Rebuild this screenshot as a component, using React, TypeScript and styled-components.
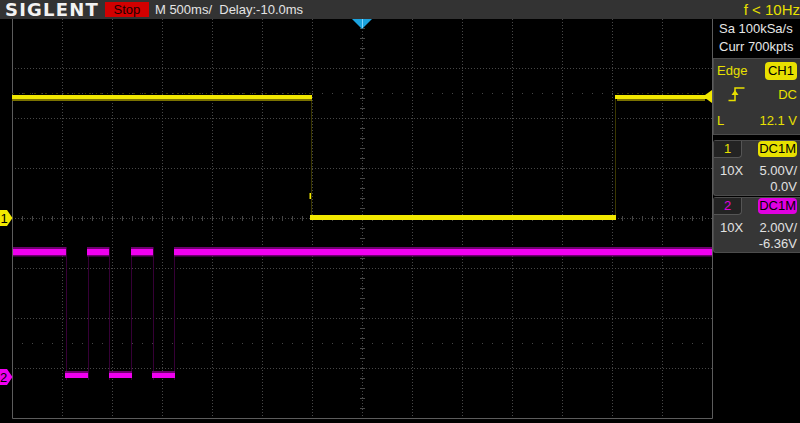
import styled, { createGlobalStyle } from 'styled-components'

const YELLOW = '#f2e800'
const YELLOW_DIM = '#7a7200'
const YELLOW_EDGE = '#3a3600'
const MAGENTA = '#f000f0'
const MAGENTA_DIM = '#6e006e'
const MAGENTA_EDGE = '#360036'
const GRID = '#474747'

const GlobalStyle = createGlobalStyle`
  html, body {
    margin: 0;
    padding: 0;
    background: #000;
    overflow: hidden;
  }
  body {
    font-family: 'Liberation Sans', Arial, sans-serif;
  }
`

const Screen = styled.div`
  width: 800px;
  height: 423px;
  display: flex;
  flex-direction: column;
  background: #000;
`

const TopBar = styled.div`
  height: 19px;
  flex: none;
  display: flex;
  align-items: center;
  background: #333333;
`

const Logo = styled.div`
  margin-left: 5px;
  font-family: 'DejaVu Sans', sans-serif;
  font-weight: 700;
  font-size: 18px;
  line-height: 19px;
  letter-spacing: 1.2px;
  color: #f2f2f2;
`

const StopBadge = styled.div`
  margin-left: 6px;
  width: 44px;
  height: 15px;
  background: #d20000;
  color: #1c0000;
  font-size: 13px;
  line-height: 15px;
  text-align: center;
`

const Timebase = styled.div`
  margin-left: 6px;
  color: #e4e4e4;
  font-size: 13px;
  white-space: pre;
`

const Freq = styled.div`
  margin-left: auto;
  color: #e8e000;
  font-size: 15px;
  white-space: pre;
`

const Body = styled.div`
  flex: 1;
  display: flex;
`

const Plot = styled.svg`
  display: block;
  flex: none;
`

const Side = styled.div`
  width: 87px;
  flex: none;
  display: flex;
  flex-direction: column;
  padding-top: 1px;
`

const InfoLine = styled.div`
  height: 18px;
  line-height: 18px;
  padding-left: 6px;
  color: #e6e6e6;
  font-size: 13px;
  white-space: nowrap;
`

const TrigBox = styled.div`
  margin-top: 2px;
  height: 77px;
  box-sizing: border-box;
  background: #353535;
  border: 1px solid #4c4c4c;
  border-right: none;
  padding: 1px 3px 0 3px;
  display: grid;
  grid-template-rows: 21px 26px 27px;
`

const TrigRow = styled.div<{ $indent?: number }>`
  display: flex;
  align-items: center;
  justify-content: space-between;
  padding-left: ${({ $indent }) => $indent ?? 0}px;
`

const YText = styled.span`
  color: #e8e000;
  font-size: 13px;
`

const Pill = styled.span<{ $bg: string; $h: number; $pad: number }>`
  background: ${({ $bg }) => $bg};
  color: #000;
  font-size: 13px;
  height: ${({ $h }) => $h}px;
  line-height: ${({ $h }) => $h}px;
  padding: 0 ${({ $pad }) => $pad}px;
  border-radius: 4px;
`

const ChanBox = styled.div<{ $gap: number }>`
  margin-top: ${({ $gap }) => $gap}px;
  height: 56px;
  box-sizing: border-box;
  background: #363636;
  border: 1px solid #4c4c4c;
  border-right: none;
  border-radius: 3px 0 0 3px;
  display: flex;
  flex-direction: column;
`

const ChanHead = styled.div`
  height: 20px;
  flex: none;
  display: flex;
  align-items: flex-start;
  justify-content: space-between;
  padding-right: 3px;
  margin-bottom: 2px;
`

const ChanTab = styled.div<{ $color: string }>`
  width: 28px;
  height: 17px;
  box-sizing: border-box;
  background: #232323;
  border-right: 1px solid #555;
  border-bottom: 1px solid #555;
  border-radius: 0 0 4px 0;
  color: ${({ $color }) => $color};
  font-size: 13px;
  line-height: 16px;
  text-align: center;
`

const ChanRow = styled.div`
  height: 16px;
  line-height: 16px;
  display: flex;
  justify-content: space-between;
  padding: 0 3px 0 6px;
  color: #e2e2e2;
  font-size: 13px;
`

const hLines = [68, 118, 168, 218, 268, 318, 368]
const vLines = Array.from({ length: 13 }, (_, i) => 62 + i * 50)
const tickXs = Array.from({ length: 70 }, (_, i) => 22 + i * 10)
const tickYs = Array.from({ length: 40 }, (_, i) => 28 + i * 10)

const magHigh = [
  [13, 66],
  [87, 109],
  [131, 153],
  [174, 712],
]
const magLow = [
  [65, 88],
  [109, 132],
  [152, 175],
]
const magEdges = [66, 88, 109, 131, 153, 174]

function EdgeIcon() {
  return (
    <svg width="17" height="16" viewBox="0 0 17 16">
      <path d="M0.5 14.5 H7 V2 H16.5" stroke="#e8e000" strokeWidth="1.5" fill="none" />
      <path d="M7 4 L3.5 9 H10.5 Z" fill="#e8e000" />
    </svg>
  )
}

function Scope() {
  return (
    <Plot width={713} height={404} viewBox="0 19 713 404">
      <rect x={0} y={19} width={713} height={404} fill="#000" />

      {vLines.map((x) => (
        <line key={`v${x}`} x1={x + 0.5} y1={19} x2={x + 0.5} y2={418} stroke={GRID} strokeDasharray="1 2" />
      ))}
      {hLines.map((y) => (
        <line key={`h${y}`} x1={12} y1={y + 0.5} x2={712} y2={y + 0.5} stroke={GRID} strokeDasharray="1 2" />
      ))}
      {tickXs.map((x) => (
        <g key={`t${x}`}>
          <line x1={x + 0.5} y1={216} x2={x + 0.5} y2={221} stroke={GRID} />
          <rect x={x} y={93} width={1} height={1} fill={GRID} />
          <rect x={x} y={343} width={1} height={1} fill={GRID} />
        </g>
      ))}
      {tickYs.map((y) => (
        <line key={`ty${y}`} x1={360} y1={y + 0.5} x2={365} y2={y + 0.5} stroke={GRID} />
      ))}
      <path d="M12.5 19 V418.5 H712.5 V19" stroke="#5c5c5c" fill="none" />

      {/* channel 2 */}
      {magEdges.map((x) => (
        <line key={`me${x}`} x1={x + 0.5} y1={247} x2={x + 0.5} y2={380} stroke={MAGENTA_EDGE} />
      ))}
      {magHigh.map(([a, b]) => (
        <g key={`mh${a}`}>
          <rect x={a} y={247} width={b - a} height={2} fill={MAGENTA_DIM} />
          <rect x={a} y={249} width={b - a} height={6} fill={MAGENTA} />
          <rect x={a} y={255} width={b - a} height={1.5} fill={MAGENTA_DIM} />
        </g>
      ))}
      {magLow.map(([a, b]) => (
        <g key={`ml${a}`}>
          <rect x={a} y={371} width={b - a} height={2} fill={MAGENTA_DIM} />
          <rect x={a} y={373} width={b - a} height={5} fill={MAGENTA} />
        </g>
      ))}

      {/* channel 1 */}
      <line x1={311.5} y1={99} x2={311.5} y2={215} stroke={YELLOW_EDGE} />
      <line x1={615.5} y1={99} x2={615.5} y2={215} stroke={YELLOW_EDGE} />
      <line x1={12} y1={93.5} x2={312} y2={93.5} stroke={YELLOW_EDGE} strokeDasharray="2 5 1 3" />
      <line x1={617} y1={93.5} x2={704} y2={93.5} stroke={YELLOW_EDGE} strokeDasharray="2 3 1 4" />
      <rect x={12} y={95} width={300} height={4} fill={YELLOW} />
      <rect x={12} y={99} width={300} height={2} fill={YELLOW_DIM} />
      <rect x={309.5} y={193} width={1.5} height={6} fill={YELLOW} />
      <rect x={310} y={215} width={306} height={5} fill={YELLOW} />
      <rect x={615} y={95} width={92} height={4} fill={YELLOW} />
      <rect x={617} y={99} width={88} height={2} fill={YELLOW_DIM} />

      {/* trigger level */}
      <path d="M703 96.5 L712 90 V103 Z" fill={YELLOW} />
      {/* trigger position */}
      <path d="M352 19 H372 L362 29 Z" fill="#1ba3df" />
      <line x1={362.5} y1={19} x2={362.5} y2={28} stroke="#7fd6ff" />

      {/* channel markers */}
      <path d="M0 210 H7 L12.5 218 L7 226 H0 Z" fill={YELLOW} />
      <text x={0.5} y={223} fontSize={13} fill="#000" fontFamily="Liberation Sans, sans-serif">1</text>
      <path d="M0 369 H7 L12.5 377 L7 385 H0 Z" fill={MAGENTA} />
      <text x={0} y={382} fontSize={13} fill="#000" fontFamily="Liberation Sans, sans-serif">2</text>
    </Plot>
  )
}

function App() {
  return (
    <Screen>
      <GlobalStyle />
      <TopBar>
        <Logo>SIGLENT</Logo>
        <StopBadge>Stop</StopBadge>
        <Timebase>{'M 500ms/  Delay:-10.0ms'}</Timebase>
        <Freq>{'f < 10Hz'}</Freq>
      </TopBar>
      <Body>
        <Scope />
        <Side>
          <InfoLine>Sa 100kSa/s</InfoLine>
          <InfoLine>Curr 700kpts</InfoLine>
          <TrigBox>
            <TrigRow>
              <YText>Edge</YText>
              <Pill $bg="#e8e000" $h={18} $pad={3}>CH1</Pill>
            </TrigRow>
            <TrigRow $indent={11}>
              <EdgeIcon />
              <YText>DC</YText>
            </TrigRow>
            <TrigRow>
              <YText>L</YText>
              <YText>12.1 V</YText>
            </TrigRow>
          </TrigBox>
          <ChanBox $gap={5}>
            <ChanHead>
              <ChanTab $color="#e8e000">1</ChanTab>
              <Pill $bg="#e8e000" $h={16} $pad={1}>DC1M</Pill>
            </ChanHead>
            <ChanRow>
              <span>10X</span>
              <span>5.00V/</span>
            </ChanRow>
            <ChanRow>
              <span />
              <span>0.0V</span>
            </ChanRow>
          </ChanBox>
          <ChanBox $gap={1}>
            <ChanHead>
              <ChanTab $color="#e000e0">2</ChanTab>
              <Pill $bg="#e000e0" $h={16} $pad={1}>DC1M</Pill>
            </ChanHead>
            <ChanRow>
              <span>10X</span>
              <span>2.00V/</span>
            </ChanRow>
            <ChanRow>
              <span />
              <span>-6.36V</span>
            </ChanRow>
          </ChanBox>
        </Side>
      </Body>
    </Screen>
  )
}

export default App
